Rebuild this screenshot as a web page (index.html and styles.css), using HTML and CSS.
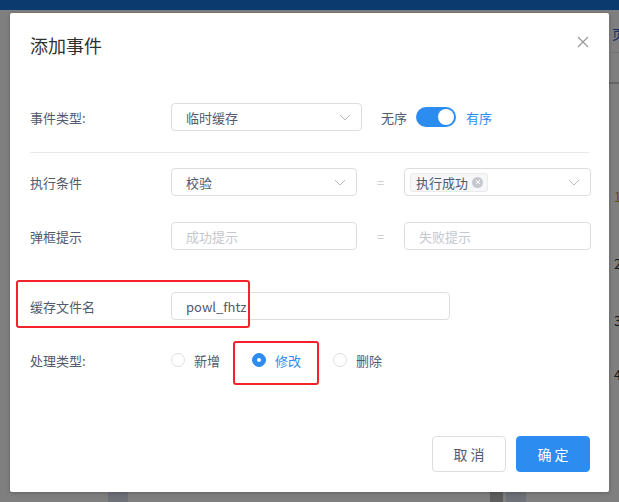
FILE: index.html
```html
<!DOCTYPE html>
<html lang="zh">
<head>
<meta charset="utf-8">
<link rel="stylesheet" href="styles.css">
</head>
<body>
<div class="page">
  <div class="topbar"></div>
  <div class="bg-right">
    <span class="bg-link">页</span>
    <div class="bg-line l1"></div>
    <div class="bg-line l2"></div>
    <div class="bg-circle"></div>
    <div class="bg-num n1">1</div>
    <div class="bg-num n2">2</div>
    <div class="bg-num n3">3</div>
    <div class="bg-num n4">4</div>
  </div>
  <div class="bg-bottom">
    <span class="blk b1"></span><span class="blk b2"></span><span class="blk b3"></span>
  </div>
</div>
<div class="mask"></div>

<div class="dialog">
  <div class="dlg-header">
    <span class="dlg-title">添加事件</span>
    <svg class="dlg-close" width="12" height="12" viewBox="0 0 12 12"><path d="M1 1L11 11M11 1L1 11" stroke="#999" stroke-width="1.2" fill="none"/></svg>
  </div>

  <div class="row row1">
    <div class="label">事件类型:</div>
    <div class="select w191"><span class="val">临时缓存</span><svg class="chev" width="12" height="7" viewBox="0 0 12 7"><path d="M1 1L6 6L11 1" stroke="#b5b9c2" stroke-width="1" fill="none"/></svg></div>
    <span class="sw-off">无序</span>
    <span class="switch"><span class="knob"></span></span>
    <span class="sw-on">有序</span>
  </div>

  <div class="divider"></div>

  <div class="row row2">
    <div class="label">执行条件</div>
    <div class="select w186"><span class="val">校验</span><svg class="chev" width="12" height="7" viewBox="0 0 12 7"><path d="M1 1L6 6L11 1" stroke="#b5b9c2" stroke-width="1" fill="none"/></svg></div>
    <span class="eq">=</span>
    <div class="select w187 multi">
      <span class="tag">执行成功<span class="tag-x"><svg width="6" height="6" viewBox="0 0 6 6"><path d="M1 1L5 5M5 1L1 5" stroke="#fff" stroke-width="1" fill="none"/></svg></span></span>
      <svg class="chev" width="12" height="7" viewBox="0 0 12 7"><path d="M1 1L6 6L11 1" stroke="#b5b9c2" stroke-width="1" fill="none"/></svg>
    </div>
  </div>

  <div class="row row3">
    <div class="label">弹框提示</div>
    <div class="input w186 ph">成功提示</div>
    <span class="eq">=</span>
    <div class="input w187 ph">失败提示</div>
  </div>

  <div class="row row4">
    <div class="label">缓存文件名</div>
    <div class="input w279 filled">powl_fhtz</div>
  </div>

  <div class="row row5">
    <div class="label">处理类型:</div>
    <div class="radios">
      <span class="radio"><span class="circle"></span><span class="rtext">新增</span></span>
      <span class="radio checked"><span class="circle"></span><span class="rtext">修改</span></span>
      <span class="radio"><span class="circle"></span><span class="rtext">删除</span></span>
    </div>
  </div>

  <div class="footer">
    <button class="btn">取 消</button>
    <button class="btn primary">确 定</button>
  </div>

  <div class="mark mark1"></div>
  <div class="mark mark2"></div>
</div>
</body>
</html>
```
FILE: styles.css
```css
* { box-sizing: border-box; }
html, body { margin: 0; padding: 0; }
body {
  width: 619px; height: 502px; overflow: hidden;
  font-family: "Noto Sans CJK SC", "Noto Sans", sans-serif;
  background: #fff;
  position: relative;
}
.page { position: absolute; inset: 0; background: #fff; }
.topbar { height: 10px; background: #0a3a6e; position: relative; z-index: 3; }
.bg-right { position: absolute; left: 609px; top: 10px; right: 0; bottom: 0; }
.bg-link { position: absolute; left: 3px; top: 14px; font-size: 13px; color: #2d5bd0; }
.bg-line { position: absolute; left: 0; right: 0; height: 1px; background: #e4e4e4; }
.bg-line.l1 { top: 42px; }
.bg-line.l2 { top: 72px; height: 2px; background: #ccc; }
.bg-circle { position: absolute; left: 15px; top: 133px; width: 24px; height: 24px; border: 1px solid #ccc; border-radius: 50%; }
.bg-num { position: absolute; left: 5px; font-size: 13px; color: #333; }
.n1 { top: 177px; color: #d09a2a; } .n2 { top: 244px; } .n3 { top: 301px; } .n4 { top: 355px; }
.bg-bottom { position: absolute; left: 0; right: 0; top: 492px; height: 10px; }
.blk { position: absolute; top: 0; height: 10px; background: #dde3ee; }
.b1 { left: 108px; width: 20px; }
.b2 { left: 490px; width: 13px; background: #bbb; }
.b3 { left: 506px; width: 20px; }
.mask { position: absolute; left: 0; right: 0; top: 10px; bottom: 0; background: rgba(0,0,0,0.5); z-index: 2; }

.dialog {
  position: absolute; left: 10px; top: 13px; width: 599px; height: 479px;
  background: #fff; border-radius: 2px; z-index: 5;
  padding: 0 20px;
  box-shadow: 0 1px 4px rgba(0,0,0,0.25);
  color: #515a6e; font-size: 13px;
}
.dlg-header { display: flex; align-items: center; justify-content: space-between; height: 44px; padding-top: 20px; }
.dlg-title { font-size: 18px; line-height: 24px; color: #303133; }
.dlg-close { margin-right: 0; margin-top: -6px; }

.row { display: flex; align-items: center; height: 28px; }
.label { width: 141px; flex: none; color: #515a6e; font-size: 13px; }
.row1 { margin-top: 46px; }
.divider { height: 1px; background: #e8eaec; margin-top: 21px; margin-right: 0; width: 559px; }
.row2 { margin-top: 15px; }
.row3 { margin-top: 26px; }
.row4 { margin-top: 42px; }
.row5 { margin-top: 26px; }

.select, .input {
  height: 28px; border: 1px solid #dcdee2; border-radius: 4px;
  display: flex; align-items: center; padding: 0 10px 0 14px; flex: none;
  font-size: 13px; color: #515a6e; background: #fff;
}
.select { justify-content: space-between; }
.w191 { width: 191px; }
.w186 { width: 186px; }
.w187 { width: 187px; }
.w279 { width: 279px; }
.select.multi { padding-left: 5px; }
.ph { color: #c5c8ce; }
.filled { color: #515a6e; }
.chev { flex: none; }

.sw-off { margin-left: 19px; color: #515a6e; }
.switch { width: 40px; height: 20px; border-radius: 10px; background: #2d8cf0; position: relative; margin-left: 9px; flex: none; }
.knob { position: absolute; right: 2px; top: 2px; width: 16px; height: 16px; border-radius: 50%; background: #fff; }
.sw-on { margin-left: 10px; color: #2d8cf0; }

.eq { width: 47px; text-align: center; color: #c5c8ce; flex: none; }

.tag {
  display: inline-flex; align-items: center; height: 19px;
  background: #f7f7f7; border: 1px solid #e8eaec; border-radius: 3px;
  padding: 0 4px 0 5px; font-size: 13px; color: #515a6e; gap: 4px;
}
.tag-x { width: 11px; height: 11px; border-radius: 50%; background: #c5c8ce; display: inline-flex; align-items: center; justify-content: center; }

.radios { display: flex; align-items: center; }
.radio { display: inline-flex; align-items: center; margin-right: 32px; }
.radio .circle { width: 14px; height: 14px; border: 1px solid #dcdee2; border-radius: 50%; background: #fff; position: relative; }
.radio .rtext { margin-left: 9px; color: #515a6e; }
.radio.checked .circle { background: #2d8cf0; border-color: #2d8cf0; }
.radio.checked .circle::after { content: ""; position: absolute; left: 4px; top: 4px; width: 4px; height: 4px; border-radius: 50%; background: #fff; }
.radio.checked .rtext { color: #2d8cf0; }

.footer { position: absolute; right: 19px; bottom: 20px; display: flex; gap: 10px; }
.btn {
  width: 74px; height: 36px; border-radius: 4px; border: 1px solid #dcdee2;
  background: #fff; color: #515a6e; font-size: 14px;
  font-family: "Noto Sans CJK SC", "Noto Sans", sans-serif;
}
.btn.primary { background: #2d8cf0; border-color: #2d8cf0; color: #fff; }

.mark { position: absolute; border: 2px solid #f5222d; border-radius: 3px; }
.mark1 { left: 6px; top: 267px; width: 234px; height: 48px; }
.mark2 { left: 223px; top: 328px; width: 86px; height: 44px; }
```
